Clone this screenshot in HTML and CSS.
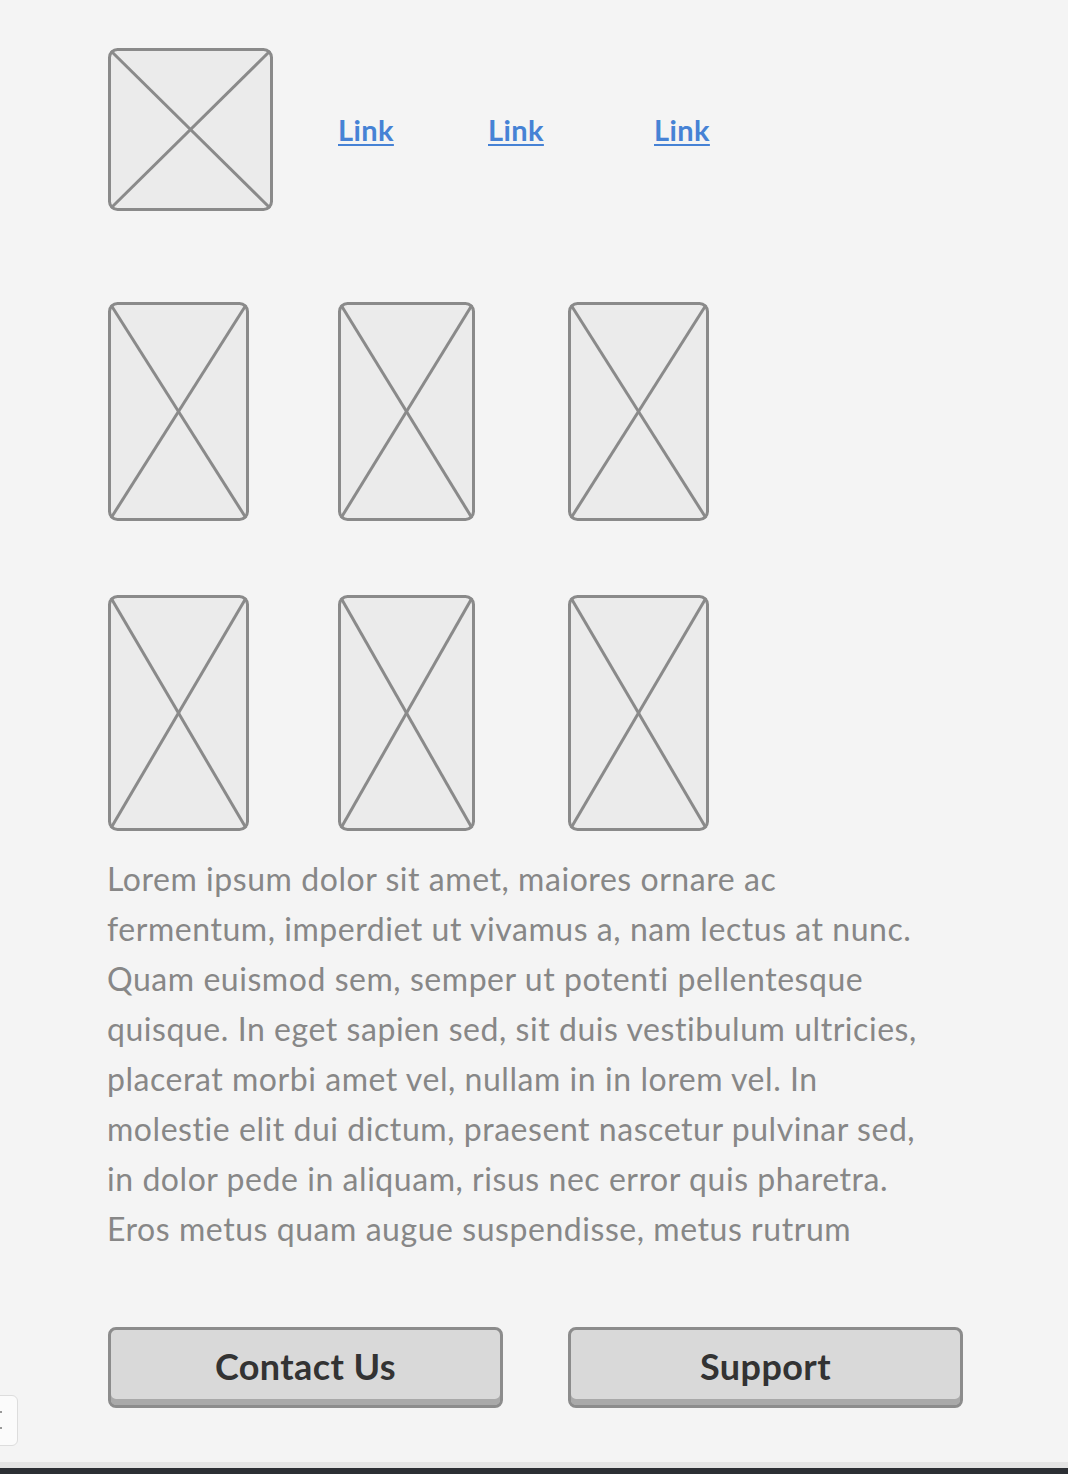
FILE: index.html
```html
<!DOCTYPE html>
<html>
<head>
<meta charset="utf-8">
<link rel="stylesheet" href="styles.css">
</head>
<body>
<div class="page">
  <header class="header">
    <svg class="ph ph-top" width="165" height="163" viewBox="0 0 165 163">
      <rect x="1.5" y="1.5" width="162" height="160" rx="8" ry="8" class="ph-box"/>
      <line x1="3" y1="3" x2="162" y2="160" class="ph-line"/>
      <line x1="162" y1="3" x2="3" y2="160" class="ph-line"/>
    </svg>
    <nav class="links">
      <a href="#" class="link">Link</a>
      <a href="#" class="link">Link</a>
      <a href="#" class="link">Link</a>
    </nav>
  </header>

  <section class="gallery">
    <div class="row row-1">
      <svg width="141" height="219" viewBox="0 0 141 219"><rect x="1.5" y="1.5" width="138" height="216" rx="8" class="ph-box"/><line x1="3" y1="3" x2="138" y2="216" class="ph-line"/><line x1="138" y1="3" x2="3" y2="216" class="ph-line"/></svg>
      <svg width="137" height="219" viewBox="0 0 137 219"><rect x="1.5" y="1.5" width="134" height="216" rx="8" class="ph-box"/><line x1="3" y1="3" x2="134" y2="216" class="ph-line"/><line x1="134" y1="3" x2="3" y2="216" class="ph-line"/></svg>
      <svg width="141" height="219" viewBox="0 0 141 219"><rect x="1.5" y="1.5" width="138" height="216" rx="8" class="ph-box"/><line x1="3" y1="3" x2="138" y2="216" class="ph-line"/><line x1="138" y1="3" x2="3" y2="216" class="ph-line"/></svg>
    </div>
    <div class="row row-2">
      <svg width="141" height="236" viewBox="0 0 141 236"><rect x="1.5" y="1.5" width="138" height="233" rx="8" class="ph-box"/><line x1="3" y1="3" x2="138" y2="233" class="ph-line"/><line x1="138" y1="3" x2="3" y2="233" class="ph-line"/></svg>
      <svg width="137" height="236" viewBox="0 0 137 236"><rect x="1.5" y="1.5" width="134" height="233" rx="8" class="ph-box"/><line x1="3" y1="3" x2="134" y2="233" class="ph-line"/><line x1="134" y1="3" x2="3" y2="233" class="ph-line"/></svg>
      <svg width="141" height="236" viewBox="0 0 141 236"><rect x="1.5" y="1.5" width="138" height="233" rx="8" class="ph-box"/><line x1="3" y1="3" x2="138" y2="233" class="ph-line"/><line x1="138" y1="3" x2="3" y2="233" class="ph-line"/></svg>
    </div>
  </section>

  <p class="body-text">Lorem ipsum dolor sit amet, maiores ornare ac<br>
fermentum, imperdiet ut vivamus a, nam lectus at nunc.<br>
Quam euismod sem, semper ut potenti pellentesque<br>
quisque. In eget sapien sed, sit duis vestibulum ultricies,<br>
placerat morbi amet vel, nullam in in lorem vel. In<br>
molestie elit dui dictum, praesent nascetur pulvinar sed,<br>
in dolor pede in aliquam, risus nec error quis pharetra.<br>
Eros metus quam augue suspendisse, metus rutrum</p>

  <div class="buttons">
    <button class="btn">Contact Us</button>
    <button class="btn">Support</button>
  </div>

  <div class="side-tab"><span class="dot"></span><span class="dot"></span></div>
</div>
<footer class="bottom-bar"></footer>
</body>
</html>
```

FILE: styles.css
```css
html, body {
  margin: 0;
  padding: 0;
  background: #f4f4f4;
}
body {
  font-family: Lato, "Open Sans", sans-serif;
  width: 1068px;
  height: 1474px;
  overflow: hidden;
  display: flex;
  flex-direction: column;
}
.page {
  position: relative;
  flex: 1;
  padding: 48px 0 0 108px;
}
.ph { display: block; }
.ph-box {
  fill: #ebebeb;
  stroke: #8a8a8a;
  stroke-width: 3;
}
.ph-line {
  stroke: #8a8a8a;
  stroke-width: 3;
}
.header {
  display: flex;
  align-items: center;
  height: 163px;
}
.links {
  display: grid;
  grid-template-columns: 150px 166px auto;
  margin-left: 65px;
  margin-top: 0;
}
.link {
  font-weight: 700;
  font-size: 29px;
  letter-spacing: 0.4px;
  color: #4682d5;
  text-decoration: underline;
  text-decoration-thickness: 2px;
  text-underline-offset: 3px;
}
.gallery {
  margin-top: 91px;
  display: flex;
  flex-direction: column;
  gap: 74px;
}
.row {
  display: grid;
  grid-template-columns: 230px 230px 141px;
  align-items: start;
}
.row svg { display: block; }
.body-text {
  margin: 23px 0 0 -1px;
  font-size: 32px;
  letter-spacing: 0.55px;
  line-height: 50px;
  color: #878787;
}
.buttons {
  margin-top: 73px;
  display: grid;
  grid-template-columns: 395px 395px;
  column-gap: 65px;
}
.btn {
  height: 81px;
  box-sizing: border-box;
  background: #d9d9d9;
  border: 3px solid #8c8c8c;
  border-radius: 8px;
  box-shadow: inset 0 -6px 0 #a9a9a9;
  font-family: Lato, "Open Sans", sans-serif;
  font-weight: 700;
  font-size: 36px;
  letter-spacing: 0.4px;
  color: #333333;
  padding: 0 0 4px;
}
.side-tab {
  position: absolute;
  left: -10px;
  top: 1395px;
  width: 28px;
  height: 51px;
  box-sizing: border-box;
  background: #fbfbfb;
  border: 1px solid #dddddd;
  border-radius: 6px;
}
.dot {
  position: absolute;
  left: 9px;
  width: 2px;
  height: 2px;
  background: #999;
}
.dot:first-child { top: 15px; }
.dot:last-child { top: 31px; }
.bottom-bar {
  height: 12px;
  background: linear-gradient(#e4e4e4 0 6px, #2c2f34 6px 12px);
}
```
